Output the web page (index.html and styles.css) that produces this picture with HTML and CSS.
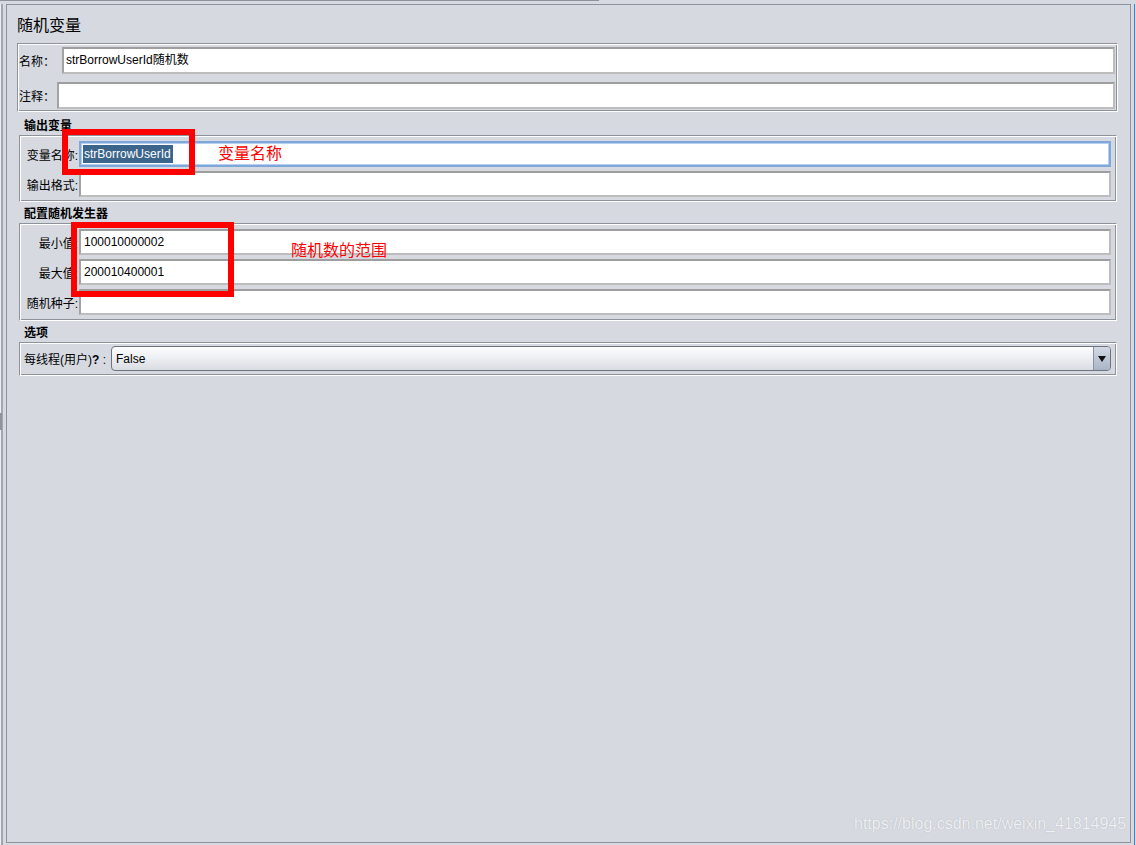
FILE: index.html
```html
<!DOCTYPE html>
<html lang="zh-CN">
<head>
<meta charset="utf-8">
<title>随机变量</title>
<link rel="stylesheet" href="styles.css">
</head>
<body>
<div class="tabline"><div class="tabbar"></div></div>
<div class="main">
  <div class="split"><div class="knob"></div></div>
  <div class="panel">
    <div class="title">随机变量</div>
    <div class="group g1">
      <div class="row r1"><span class="lbl l-name">名称：</span><div class="field fname">strBorrowUserId随机数</div></div>
      <div class="row r1"><span class="lbl l-cmt">注释：</span><div class="field fname"></div></div>
    </div>
    <div class="hdr h1">输出变量</div>
    <div class="group g">
      <div class="row"><span class="lbl lr">变量名称:</span><div class="field focus"><span class="sel">strBorrowUserId</span></div></div>
      <div class="row"><span class="lbl lr">输出格式:</span><div class="field"></div></div>
    </div>
    <div class="hdr">配置随机发生器</div>
    <div class="group g g3">
      <div class="row"><span class="lbl lr">最小值:</span><div class="field">100010000002</div></div>
      <div class="row"><span class="lbl lr">最大值:</span><div class="field">200010400001</div></div>
      <div class="row"><span class="lbl lr">随机种子:</span><div class="field"></div></div>
    </div>
    <div class="hdr">选项</div>
    <div class="group g g4">
      <div class="row"><span class="lbl l-opt">每线程(用户)<b>?</b> :</span>
        <div class="combo"><span class="val">False</span><span class="arrow"><span class="tri"></span></span></div>
      </div>
    </div>
  </div>
  <div class="rstrip"><div class="blue"></div></div>
</div>
<div class="mark m1"></div>
<div class="mark m2"></div>
<div class="note n1">变量名称</div>
<div class="note n2">随机数的范围</div>
<div class="wm">https://blog.csdn.net/weixin_41814945</div>
</body>
</html>
```
FILE: styles.css
```css
* { box-sizing: border-box; }
html, body { margin: 0; height: 845px; overflow: hidden; }
body {
  background: #d6d9e0;
  font-family: "Liberation Sans", "Noto Sans CJK SC", sans-serif;
  font-size: 12px;
  color: #000;
  position: relative;
}
.tabline { height: 4px; }
.tabbar { width: 599px; height: 1px; background: #8e929b; }
.main { display: flex; height: 841px; }
.split {
  width: 6px;
  box-shadow: inset 1px 0 #eceef2, inset 3px 0 #a2a6ae;
}
.knob { margin-top: 409px; width: 2px; height: 17px; background: #8f939b; }
.panel {
  width: 1125px;
  height: 839px;
  border: 1px solid #8e929b;
  display: flex;
  flex-direction: column;
}
.rstrip { width: 5px; padding-left: 3px; }
.blue { width: 1px; height: 100%; background: #3a85d1; }

.title {
  padding: 11px 0 7px 10px;
  font-size: 16px;
  line-height: 20px;
}
.group {
  border: 1px solid;
  border-color: #8e929b #fff #fff #8e929b;
  box-shadow: inset 1px 1px 0 #fff, inset -1px -1px 0 #8e929b;
  display: flex;
  flex-direction: column;
}
.g1 { margin: 0 12px 0 10px; padding: 3px 2px 2px 1px; gap: 8px; }
.g { margin: 0 13px 0 12px; padding: 5px 5px 4px 1px; gap: 4px; }
.g3 { padding-bottom: 5px; }
.g4 { padding: 3px 5px 4px 1px; }

.hdr {
  margin-left: 12px;
  padding: 4px 0 1px 5px;
  font-weight: bold;
  line-height: 16px;
}
.h1 { padding-top: 6px; }

.row { display: flex; align-items: center; }
.lbl { white-space: nowrap; flex: none; }
.l-name { width: 43px; }
.l-cmt { width: 38px; }
.lr { width: 58px; text-align: right; padding-right: 1px; }
.l-opt { width: 90px; padding-left: 3px; }

.field {
  flex: 1;
  height: 26px;
  background: #fff;
  border: 2px solid;
  border-color: #9e9e9e #bdbdbd #bdbdbd #a3a3a3;
  padding: 0 3px;
  line-height: 22px;
  white-space: nowrap;
}
.r1 .field { height: 27px; line-height: 23px; }
.fname { padding-left: 2px; }
.focus {
  border-color: #7ea8db;
  box-shadow: inset 0 0 0 1px #b6cfee;
  padding-left: 2px;
  display: flex;
  align-items: center;
}
.sel {
  background: #3c658c;
  color: #fff;
  line-height: 18px;
  padding: 0 2px 0 1px;
}

.combo {
  flex: 1;
  height: 25px;
  border: 1px solid #6c7480;
  border-radius: 4px;
  background: linear-gradient(#fcfcfd, #eef0f3 45%, #d9dce2);
  display: flex;
  align-items: center;
  overflow: hidden;
}
.val { flex: 1; padding-left: 4px; }
.arrow {
  width: 17px;
  height: 100%;
  border-left: 1px solid #8a93a1;
  background: linear-gradient(#d2d9e3, #a9b5c6);
  display: flex;
  align-items: center;
  justify-content: center;
}
.tri {
  width: 0;
  height: 0;
  border-left: 4px solid transparent;
  border-right: 4px solid transparent;
  border-top: 6px solid #111;
}

.mark { position: absolute; border: 6px solid #ff0000; }
.m1 { left: 62px; top: 129px; width: 133px; height: 46px; }
.m2 { left: 71px; top: 222px; width: 163px; height: 75px; }
.note {
  position: absolute;
  color: #ff0000;
  font-family: "Noto Sans CJK SC", sans-serif;
  font-size: 16px;
  line-height: 20px;
}
.n1 { left: 218px; top: 142px; }
.n2 { left: 291px; top: 239px; }
.wm {
  position: absolute;
  left: 854px;
  top: 814px;
  font-size: 16px;
  line-height: 20px;
  color: #eef0f3;
  text-shadow: 0 0 1px #a5a9b1;
  white-space: nowrap;
}
```
